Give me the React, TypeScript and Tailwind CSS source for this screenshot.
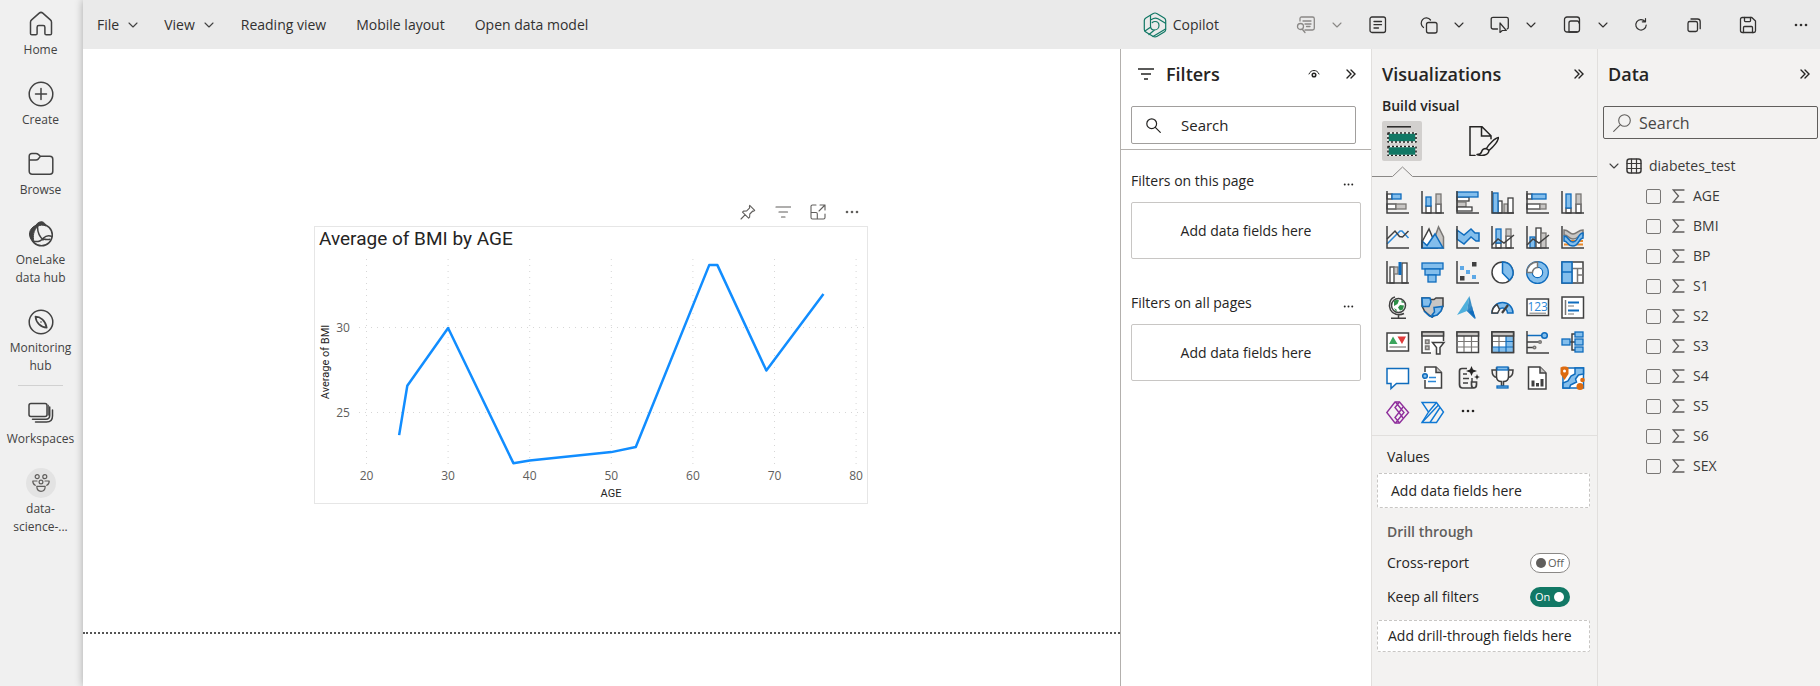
import React from "react";

type IconProps = { className?: string; children: React.ReactNode; box?: string };

function Icon({ className = "size-6", box = "0 0 24 24", children }: IconProps) {
  return (
    <svg
      className={className}
      viewBox={box}
      fill="none"
      stroke="currentColor"
      strokeWidth="1.5"
      strokeLinecap="round"
      strokeLinejoin="round"
      aria-hidden="true"
    >
      {children}
    </svg>
  );
}

const HomeIcon = () => (
  <Icon className="size-[26px]" box="0 0 26 26">
    <path d="M2.500 11.200c0-1 .4-1.700 1.100-2.300l7.600-6.800c1.100-.9 2.500-.9 3.600 0l7.600 6.800c.7.6 1.100 1.300 1.100 2.300v11.300c0 .8-.6 1.300-1.300 1.300h-4c-.8 0-1.300-.6-1.300-1.300v-6.300c0-1-.7-1.700-1.700-1.700h-4.400c-1 0-1.700.7-1.700 1.700v6.300c0 .8-.6 1.300-1.300 1.300h-4c-.8 0-1.300-.6-1.300-1.300z" />
  </Icon>
);

const CreateIcon = () => (
  <Icon className="size-[26px]" box="0 0 26 26">
    <circle cx="13" cy="13" r="11.800" />
    <path d="M13 7.500v11M7.500 13h11" />
  </Icon>
);

const BrowseIcon = () => (
  <Icon className="size-[26px]" box="0 0 26 26">
    <path d="M1.200 9V5.200c0-1.700 1-2.800 2.700-2.800h4c1 0 1.700.3 2.400 1l2 1.800h9.500c1.800 0 3 1.200 3 3v12c0 1.800-1.200 3-3 3H4.200c-1.800 0-3-1.200-3-3zh6.800c.9 0 1.600-.3 2.200-.9l2-2.600" />
  </Icon>
);

const OneLakeIcon = () => (
  <Icon className="size-[26px]" box="0 0 26 26">
    <circle cx="13.500" cy="14" r="10.800" />
    <path d="M8 4C9.500 1.500 12 .5 14 .8c2 .3 3.500 2 4 4.200-3-1.400-6-1.200-8.500.5z" fill="currentColor" strokeWidth="1" />
    <path d="M7.500 4.500C3.500 6.500 1.500 9.500 1.500 13c0 3.500 1.700 6.500 4.500 8C4.500 15 5.500 9.500 9.500 5.500z" fill="currentColor" strokeWidth="1" />
    <path d="M9.500 5.500c0 7 2.500 10 5.500 13.500M6 20.500c6 .5 7-1 9.500-3.500s5-3 8.500-1.500M16 18c2 1 4 .5 6 .3" />
  </Icon>
);

const MonitorIcon = () => (
  <Icon className="size-[26px]" box="0 0 26 26">
    <circle cx="13" cy="13" r="11.800" />
    <path d="M7.500 7.500c4.500 0 10 4 11.200 11.200C13 18.500 8 14 7.500 7.500z" strokeWidth="1.700" />
    <circle cx="13" cy="13" r=".8" fill="currentColor" stroke="none" />
  </Icon>
);

const WorkspacesIcon = () => (
  <Icon className="h-[22px] w-[26px]" box="0 0 26 22">
    <rect x="1" y="1.500" width="18" height="13" rx="2" />
    <path d="M4.500 17.300h13.500c2.300 0 3.700-1.400 3.700-3.700V5M7.500 20h11c3.700 0 6-2.300 6-6V8" />
    <path d="M20.300 3.200v10" strokeWidth="1" />
  </Icon>
);

const PeopleIcon = () => (
  <Icon className="size-[18px] text-[#605e5c]" box="0 0 18 18">
    <g strokeWidth="1.200">
      <circle cx="5.200" cy="2.700" r="2" />
      <circle cx="12.800" cy="2.700" r="2" />
      <circle cx="9" cy="8" r="1.900" />
      <path d="M4.800 12.300h8.400c0 3-1.500 5-4.200 5s-4.200-2-4.200-5zM5 7H.8c0 2.200.9 3.700 2.500 4.300M13 7h4.200c0 2.200-.9 3.700-2.500 4.300" />
    </g>
  </Icon>
);

function NavItem({ icon, label, gap = "gap-1" }: { icon: React.ReactNode; label: React.ReactNode; gap?: string }) {
  return (
    <a href="#" className={`flex w-full flex-col items-center text-center text-xs/[18px] text-[#424242] ${gap}`}>
      {icon}
      <span>{label}</span>
    </a>
  );
}

function Sidebar() {
  return (
    <nav aria-label="Main" className="flex w-[83px] shrink-0 flex-col items-center bg-[#f0f0f0] pt-[11px] pr-[2px] text-[#424242]">
      <div className="flex w-full flex-col gap-[22px]">
        <NavItem icon={<HomeIcon />} label="Home" />
        <NavItem icon={<CreateIcon />} label="Create" />
        <NavItem icon={<BrowseIcon />} label="Browse" />
        <NavItem icon={<OneLakeIcon />} label={<>OneLake<br />data hub</>} />
      </div>
      <div className="mt-[22px] w-full">
        <NavItem icon={<MonitorIcon />} label={<>Monitoring<br />hub</>} />
      </div>
      <div className="mt-[10px] h-px w-[45px] bg-[#d1d1d1]" />
      <div className="mt-4 w-full">
        <NavItem icon={<WorkspacesIcon />} label="Workspaces" gap="gap-[6px]" />
      </div>
      <div className="mt-5 w-full">
        <NavItem
          icon={<span className="flex size-[30px] items-center justify-center rounded-full bg-[#e3e3e3]"><PeopleIcon /></span>}
          label={<>data-<br />science-...</>}
          gap="gap-[2px]"
        />
      </div>
    </nav>
  );
}

const Chevron = ({ className = "text-[#424242]" }: { className?: string }) => (
  <Icon className={`h-[6px] w-[10px] ${className}`} box="0 0 10 6">
    <path d="M1 1l4 4 4-4" strokeWidth="1.100" />
  </Icon>
);

const CopilotIcon = () => (
  <Icon className="h-[26px] w-6 text-[#117865]" box="0 0 24 26">
    <g strokeWidth="1.200">
      <path d="M12 1c1 0 1.500.3 2.200.7l7 4.200c1 .6 1.500 1.400 1.500 2.600v9c0 1.200-.5 2-1.500 2.600l-7 4.200c-1.500.9-2.900.9-4.400 0l-7-4.200c-1-.6-1.500-1.400-1.500-2.600v-9c0-1.200.5-2 1.500-2.600l7-4.200C10.500 1.300 11 1 12 1z" />
      <path d="M7.500 3.500V14c0 2.500 1.500 4 4 4s4.500-2 4.500-4.500-1.700-4-4-4c-1 0-2 .4-2.700 1M7.500 8l3-1.500c1.500-.7 3-.5 4.500.3l7.500 4.500M2 19l5.800-4M6 22.500l5.500-4.500M10 24.500l12.500-7.500" />
    </g>
  </Icon>
);

const CommentIcon = () => (
  <Icon className="h-[18px] w-5 text-[#8a8886]" box="0 0 20 18">
    <g strokeWidth="1.300">
      <path d="M4 5V2.500C4 1.500 4.700 1 5.500 1h11c1 0 1.800.7 1.800 1.700v9.600c0 1-.8 1.700-1.800 1.700H9M7 5h8M9 8h6M10.500 10.500H14M6.500 13.500l2.500 3" />
      <circle cx="4.500" cy="10.500" r="3" />
    </g>
  </Icon>
);
const DocIcon = () => (
  <Icon className="h-[18px] w-5" box="0 0 20 18">
    <rect x="2" y="1" width="15.500" height="15.500" rx="2" strokeWidth="1.300" />
    <path d="M6 5.500h7.500M6 8.700h7.500M6 12h4.500" strokeWidth="1.300" />
  </Icon>
);
const ShapesIcon = () => (
  <Icon className="h-[20px] w-5" box="0 0 20 20">
    <g strokeWidth="1.300">
      <path d="M5.500 12.500A5.200 5.200 0 1 1 12.500 5" />
      <rect x="8.500" y="7.500" width="10.500" height="10.500" rx="2" />
    </g>
  </Icon>
);
const ButtonIcon = () => (
  <Icon className="h-[18px] w-5" box="0 0 20 18">
    <path d="M7.500 13H3c-1 0-1.800-.7-1.800-1.800V3C1.200 2 2 1.300 3 1.300h13.500c1 0 1.800.7 1.800 1.700v8.200c0 .8-.3 1.400-1 1.700" strokeWidth="1.300" />
    <path d="M10 7v9.500l2.300-2h4z" strokeWidth="1.200" />
  </Icon>
);
const PanelIcon = () => (
  <Icon className="h-[18px] w-5" box="0 0 20 18">
    <rect x="2.500" y="1" width="15" height="15" rx="2.500" strokeWidth="1.300" />
    <path d="M7 16V7c0-1.300.7-2 2-2h6c1.300 0 2 .7 2 2M7 16h8" strokeWidth="1.300" />
  </Icon>
);
const RefreshIcon = () => (
  <Icon className="size-4" box="0 0 16 16">
    <path d="M12 4.500A5.200 5.200 0 1 0 13.200 8M12.500 1.500v3.300H9.300" strokeWidth="1.200" />
  </Icon>
);
const CopyIcon = () => (
  <Icon className="size-4" box="0 0 16 16">
    <rect x="2" y="4.500" width="9.500" height="10" rx="1.800" strokeWidth="1.300" />
    <path d="M5 2h6.500c1.600 0 2.700 1 2.700 2.700v7" strokeWidth="1.300" />
  </Icon>
);
const SaveIcon = () => (
  <Icon className="size-[18px]" box="0 0 18 18">
    <g strokeWidth="1.300">
      <path d="M3.200 1.500h9.600l3.700 3.500v9.800c0 1-.7 1.700-1.700 1.700H3.200c-1 0-1.700-.7-1.700-1.700V3.200c0-1 .7-1.700 1.700-1.700z" />
      <path d="M5.500 1.500v3.300c0 .5.300.8.800.8h4.400c.5 0 .8-.3.800-.8V1.500M4.500 16.500v-5c0-.6.300-1 1-1h7c.7 0 1 .4 1 1v5" />
    </g>
  </Icon>
);
const DotsIcon = ({ className = "h-1 w-[14px]" }: { className?: string }) => (
  <svg className={className} viewBox="0 0 14 4" fill="currentColor" aria-hidden="true">
    <circle cx="2" cy="2" r="1.300" />
    <circle cx="7" cy="2" r="1.300" />
    <circle cx="12" cy="2" r="1.300" />
  </svg>
);

function Tool({ label, icon, menu, muted }: { label: string; icon: React.ReactNode; menu?: boolean; muted?: boolean }) {
  return (
    <button type="button" aria-label={label} className="flex items-center gap-4 text-[#323130]">
      {icon}
      {menu && <Chevron className={muted ? "text-[#8a8886]" : "text-[#323130]"} />}
    </button>
  );
}

function TopBar() {
  return (
    <header className="flex h-[49px] shrink-0 items-center bg-[#eaeaea] pr-3 pl-[14px] text-sm text-[#323130]">
      <div className="flex items-center gap-[26px]">
        <button type="button" className="flex items-center gap-[9px]">File <Chevron /></button>
        <button type="button" className="flex items-center gap-[9px]">View <Chevron /></button>
      </div>
      <div className="ml-[27px] flex items-center gap-[30px]">
        <button type="button">Reading view</button>
        <button type="button">Mobile layout</button>
        <button type="button">Open data model</button>
      </div>
      <div className="ml-auto flex items-center">
        <button type="button" className="mr-[77px] flex items-center gap-[6px]"><CopilotIcon />Copilot</button>
        <div className="flex items-center gap-[26px]">
          <Tool label="Explore" icon={<CommentIcon />} menu muted />
          <div className="flex items-center gap-[30px]">
            <Tool label="Text box" icon={<DocIcon />} />
            <Tool label="Shapes" icon={<ShapesIcon />} menu />
          </div>
          <Tool label="Buttons" icon={<ButtonIcon />} menu />
          <Tool label="Visual interactions" icon={<PanelIcon />} menu />
        </div>
        <div className="ml-[25px] flex items-center gap-[37px]">
          <Tool label="Refresh" icon={<RefreshIcon />} />
          <Tool label="Duplicate this page" icon={<CopyIcon />} />
          <Tool label="Save" icon={<SaveIcon />} />
          <Tool label="More options" icon={<DotsIcon />} />
        </div>
      </div>
    </header>
  );
}

const series: [number, number][] = [
  [24, 23.7], [25, 26.6], [30, 30], [38, 22.05], [40, 22.2], [50, 22.7], [53, 23], [62, 33.7], [63, 33.7], [69, 27.5], [76, 32],
];
const ages = [20, 30, 40, 50, 60, 70, 80];
const px = (age: number) => 51.5 + (age - 20) * 8.16;
const py = (bmi: number) => 101 - (bmi - 30) * 17;

function LineChart() {
  return (
    <svg viewBox="0 0 552 276" className="block w-full" role="img" aria-label="Average of BMI by AGE">
      <g stroke="#d6d6d6" strokeWidth="1" strokeDasharray="1 5">
        {ages.map((a) => <line key={a} x1={px(a)} x2={px(a)} y1="32" y2="238" />)}
        <line x1="44" x2="550" y1="100.500" y2="100.500" />
        <line x1="44" x2="550" y1="185.500" y2="185.500" />
      </g>
      <polyline points={series.map(([a, b]) => `${px(a)},${py(b)}`).join(" ")} fill="none" stroke="#118dff" strokeWidth="2.500" strokeLinejoin="round" />
      <g className="fill-[#605e5c] font-['Open_Sans',sans-serif] text-xs" textAnchor="middle">
        {ages.map((a) => <text key={a} x={px(a)} y="253">{a}</text>)}
        <text x="28" y="105">30</text>
        <text x="28" y="190">25</text>
      </g>
      <g className="fill-[#252423] font-['Roboto',sans-serif] text-[11px]" textAnchor="middle">
        <text x="296" y="270">AGE</text>
        <text transform="translate(14 135) rotate(-90)">Average of BMI</text>
      </g>
    </svg>
  );
}

function Canvas() {
  return (
    <main className="flex min-w-0 flex-1 flex-col bg-white">
      <div className="flex h-[585px] flex-col border-b-2 border-dotted border-[#555] pr-4 pl-[231px]">
        <section className="mt-[154px] w-full max-w-[554px]">
          <div className="flex h-[23px] items-center justify-end gap-[19px] pr-[9px] pb-[6px] text-[#605e5c]">
            <button type="button" aria-label="Pin visual">
              <Icon className="size-4" box="0 0 16 16">
                <path d="M9.700 1.300l5 5-.9.900-1-.2-3 3-.2 3.200-1 1L2.500 8.100l1-1 3.200-.2 3-3-.3-1.200zM5 10.800L1 15" strokeWidth="1.100" />
              </Icon>
            </button>
            <button type="button" aria-label="Filters on visual">
              <Icon className="size-4" box="0 0 16 16"><path d="M1 3h14.500M4 8h8.500M6.500 13h3.500" strokeWidth="1.200" /></Icon>
            </button>
            <button type="button" aria-label="Focus mode">
              <Icon className="size-4" box="0 0 16 16">
                <path d="M6 1H2.500C1.600 1 1 1.600 1 2.500V13.500c0 .9.600 1.500 1.500 1.500h11c.9 0 1.500-.6 1.500-1.500V10M1 8.500h5c.8 0 1.300.5 1.300 1.300V15M10 1h5v5M15 1L9 7" strokeWidth="1.100" />
              </Icon>
            </button>
            <button type="button" aria-label="More options"><DotsIcon /></button>
          </div>
          <div className="border border-[#e6e6e6]">
            <h2 className="h-0 px-1 font-['Roboto',sans-serif] text-[19px]/6 font-normal text-[#252423]">Average of BMI by AGE</h2>
            <LineChart />
          </div>
        </section>
      </div>
    </main>
  );
}

const DoubleChevron = () => (
  <Icon className="h-[10px] w-[10px] text-[#252423]" box="0 0 10 10">
    <path d="M1 1l4 4-4 4M5 1l4 4-4 4" strokeWidth="1.400" strokeLinejoin="miter" />
  </Icon>
);

const heading = "text-lg/6 font-semibold text-[#252423]";

function FilterGroup({ title }: { title: string }) {
  return (
    <section>
      <div className="flex items-center justify-between pr-[7px]">
        <h3>{title}</h3>
        <button type="button" aria-label={`${title} options`} className="pt-[6px]"><DotsIcon className="h-[3px] w-[11px]" /></button>
      </div>
      <div className="mt-[11px] flex h-[57px] items-center justify-center rounded-xs border border-[#c8c6c4]">Add data fields here</div>
    </section>
  );
}

function FiltersPane() {
  return (
    <aside aria-label="Filters" className="w-[251px] shrink-0 border-l border-[#b3b0ad] bg-white text-sm/5 text-[#252423]">
      <div className="flex h-[101px] flex-col border-b border-[#b3b0ad] pt-[13px] pl-[10px]">
        <div className="flex items-center pr-[15px] pl-[7px]">
          <Icon className="h-3 w-4" box="0 0 16 12"><path d="M0 1h16M3 6h10M6 11h4" strokeLinecap="butt" strokeWidth="1.600" /></Icon>
          <h2 className={`ml-3 ${heading}`}>Filters</h2>
          <button type="button" aria-label="Show filters" className="ml-auto mr-[26px]">
            <Icon className="h-[10px] w-3" box="0 0 12 10">
              <path d="M1 5C2 2.500 4 1.500 6 1.500S10 2.500 11 5" strokeWidth="1" />
              <circle cx="6" cy="6" r="1.800" />
            </Icon>
          </button>
          <button type="button" aria-label="Collapse filters"><DoubleChevron /></button>
        </div>
        <label className="mt-5 mr-[15px] flex h-[38px] items-center rounded-xs border border-[#a19f9d]">
          <Icon className="ml-[14px] size-[15px] shrink-0" box="0 0 15 15">
            <circle cx="5.700" cy="5.700" r="4.900" strokeWidth="1.200" />
            <path d="M9.300 9.300l5 5" strokeWidth="1.200" />
          </Icon>
          <input aria-label="Search filters" placeholder="Search" className="ml-5 w-full min-w-0 bg-transparent text-[15px] outline-none placeholder:text-[#252423]" />
        </label>
      </div>
      <div className="flex flex-col gap-[34px] pt-[21px] pr-[10px] pl-[10px]">
        <FilterGroup title="Filters on this page" />
        <FilterGroup title="Filters on all pages" />
      </div>
    </aside>
  );
}

const D = "#404040";
const B = "#83beec";
const BL = "#0f6cbd";
const G = "#c8c6c4";
const GL = "#797775";
const W = "#fff";
const Axes = () => <path d="M1 0V22H23" stroke={D} />;
const Bar = ({ b, f = W, s = D }: { b: [number, number, number, number]; f?: string; s?: string }) => (
  <rect x={b[0]} y={b[1]} width={b[2] - b[0]} height={b[3] - b[1]} fill={f} stroke={s} strokeWidth="1.300" />
);

const visuals: [string, React.ReactNode][] = [
  ["Stacked bar chart", <><Bar b={[1, 3, 6, 8]} /><Bar b={[6, 3, 15, 8]} f={B} s={BL} /><Bar b={[1, 13, 10, 18]} /><Bar b={[10, 13, 20, 18]} f={G} s={GL} /><Axes /></>],
  ["Stacked column chart", <><Bar b={[5, 15, 10, 22]} /><Bar b={[5, 6, 10, 15]} f={B} s={BL} /><Bar b={[15, 13, 20, 22]} /><Bar b={[15, 3, 20, 13]} f={G} s={GL} /><Axes /></>],
  ["Clustered bar chart", <><Bar b={[1, 6, 13, 10]} /><Bar b={[1, 11, 10, 16]} f={G} s={GL} /><Bar b={[1, 16, 16, 20]} /><Bar b={[1, 1, 22, 6]} f={B} s={BL} /><Axes /></>],
  ["Clustered column chart", <><Bar b={[7, 10, 11, 22]} /><Bar b={[13, 13, 17, 22]} f={G} s={GL} /><Bar b={[17, 7, 22, 22]} /><Bar b={[2, 2, 7, 22]} f={B} s={BL} /><Axes /></>],
  ["100% stacked bar chart", <><Bar b={[1, 3, 6, 8]} /><Bar b={[6, 3, 20, 8]} f={B} s={BL} /><Bar b={[1, 13, 14, 18]} /><Bar b={[14, 13, 20, 18]} f={G} s={GL} /><Axes /></>],
  ["100% stacked column chart", <><Bar b={[5, 17, 10, 22]} /><Bar b={[5, 3, 10, 17]} f={B} s={BL} /><Bar b={[15, 13, 20, 22]} /><Bar b={[15, 3, 20, 13]} f={G} s={GL} /><Axes /></>],
  ["Line chart", <><path d="M1 18L14 5h2l6.500 7" stroke="#2b88d8" /><path d="M1 13l8-8 4.500 5.500 3 .5 6-6" stroke={D} /><Axes /></>],
  ["Area chart", <><path d="M10 22L17.500 1l5 10v11z" fill={G} stroke={GL} /><path d="M1 16L8 3l8 19H1z" fill={W} stroke={D} /><path d="M1 22v-7l5 4.500L14 8l8 14z" fill={B} stroke={BL} /><path d="M1 0V22" stroke={D} /></>],
  ["Stacked area chart", <><path d="M1 4l7 5 7-6 4 4h4v8h-3l-5-4-7 7-7-5z" fill={B} stroke={BL} /><Axes /></>],
  ["Line and stacked column chart", <><Bar b={[5, 17, 10, 22]} /><Bar b={[5, 3, 10, 17]} f={B} s={BL} /><Bar b={[15, 10, 20, 22]} /><Bar b={[15, 3, 20, 10]} f={G} s={GL} /><path d="M1 19l6-6 6 4 10-8" stroke={D} /><Axes /></>],
  ["Line and clustered column chart", <><Bar b={[4, 11, 9, 22]} f={B} s={BL} /><Bar b={[10, 2, 15, 22]} /><Bar b={[15, 7, 20, 22]} f={G} s={GL} /><path d="M1 19l6-6 6 4 10-8" stroke={D} /><Axes /></>],
  ["Ribbon chart", <><path d="M3 15h19M3 18.500h19" stroke="#e8882a" strokeWidth="2.200" /><path d="M3 4c5 0 5 4 9 4s5-4 10-4v5c-5 0-5 4-10 4s-4-4-9-4z" fill={G} stroke={GL} /><path d="M3 10c5 0 4 6 9 6s5-9 10-9v5c-4 0-4 8-10 8s-5-5-9-5z" fill={B} stroke={BL} /><Axes /></>],
  ["Waterfall chart", <><Bar b={[4, 6, 8, 22]} /><Bar b={[8, 6, 12, 13]} f={G} s={GL} /><Bar b={[16, 2, 21, 22]} /><rect x="12.500" y="1" width="3" height="13" fill={BL} stroke="none" /><Axes /></>],
  ["Funnel", <><Bar b={[1, 2, 22, 8]} f={B} s={BL} /><Bar b={[4, 8, 19, 14]} f={B} s={BL} /><Bar b={[7, 14, 15, 21]} f={B} s={BL} /></>],
  ["Scatter chart", <><g stroke="none"><path d="M16 1h4.500v4.500H16zM4 15h4.500v4.500H4z" fill={D} /><path d="M4 5h4v4H4zM10 9h4v4H10zM16 14h4v4H16z" fill="#5ea9e6" /></g><Axes /></>],
  ["Pie chart", <><circle cx="11.500" cy="11.500" r="10.500" fill={W} stroke={D} /><path d="M11.500 1A10.500 10.500 0 0 1 18.500 19.300L11.500 12z" fill={B} stroke={BL} /></>],
  ["Donut chart", <><circle cx="11.500" cy="11.500" r="8" stroke={BL} strokeWidth="7" /><circle cx="11.500" cy="11.500" r="8" stroke={B} strokeWidth="4.500" /><circle cx="11.500" cy="11.500" r="4.500" fill={W} stroke="none" /><path d="M1 11.500A10.500 10.500 0 0 1 11.500 1V6.500A5 5 0 0 0 6.500 11.500z" fill={W} stroke={GL} /></>],
  ["Treemap", <><rect x="1" y="1" width="21" height="21" fill={W} stroke={D} /><path d="M11 1v21M11 7.500h11M16.500 7.500v14M16.500 14H22" stroke={GL} /><path d="M1 1h10v10H1zM1 11h10v11H1z" fill={B} stroke={BL} /></>],
  ["Map", <><circle cx="12.500" cy="9.500" r="7" fill={W} stroke={D} /><path d="M8 5c2-1.500 4-1.500 5-.5l-1.500 3.500L8 10zM14 9l4 .5-1 4-3 1-2-3zM8 12l3 2-1 1.500zM15.500 4l3 3-3-.5z" fill="#2d8f47" stroke="none" /><path d="M12.500 19.500v3M5 22.300h15M9 1C4 2 2 9 4.500 14c2 4 8 6 13.500 3.500" stroke={D} /></>],
  ["Filled map", <><path d="M1 2h7l1 1.500h4L15 2h7v8.500c-1 1-1.500 2-1.500 3.500l-4 4.500-3 .5-2 2-3-1.500-5-4.500L1 10z" fill={G} stroke={D} /><path d="M1 2h8l1 4-2 4.500H1.500zM13 11.500l8.500-1-1.500 4.500-4 4-3 1-2-1 2.500-3z" fill={B} stroke={BL} /><path d="M3 15l5 4.500 3 1.500 1-1" stroke={BL} /></>],
  ["Azure map", <g stroke="none"><path d="M13.500 0L1 19l10-4z" fill="#4fb0dc" /><path d="M13.500 0L11 15l8 8z" fill="#3b8fc6" /><path d="M11 15l8 8-3-13z" fill="#2a7fc2" /><path d="M13 16l4-2 3 9z" fill="#0f6cbd" /></g>],
  ["Gauge", <><path d="M1 17a10.500 10.500 0 0 1 21 0h-5.500a5 5 0 0 0-10 0z" fill={B} stroke={BL} /><path d="M1 17A10.500 10.500 0 0 1 6 8.500l2.500 5L6.500 17z" fill={W} stroke={D} /><path d="M11 17l6-8" stroke={D} strokeWidth="2.200" /></>],
  ["Card", <><rect x="1" y="3" width="21.500" height="16.500" fill={W} stroke={D} /><text x="11.700" y="15" textAnchor="middle" fontSize="12" fill="#2b88d8" stroke="none" className="font-['Open_Sans',sans-serif]">123</text><path d="M3.500 17.200h16.500" stroke={GL} strokeWidth="1" /></>],
  ["Multi-row card", <><rect x="1" y="1" width="21.500" height="21" fill={W} stroke={D} /><path d="M4.500 4v15" stroke={GL} /><path d="M7 6.500h11M7 14.500h11" stroke={BL} strokeWidth="2" /><path d="M7 10h6M7 18h6" stroke={GL} strokeWidth="1.200" /></>],
  ["KPI", <><rect x="1" y="2" width="21.500" height="18" fill={W} stroke={D} /><path d="M3 13L7 5.500l4.500 7.500z" fill="#3ba55d" stroke="none" /><path d="M11.500 5.500h8.500L16 13z" fill="#e03c3c" stroke="none" /><path d="M3.500 16h16.500" stroke={GL} strokeWidth="1.200" /></>],
  ["Slicer", <><path d="M10 22H1V1h21.500v9" fill={W} stroke={D} /><path d="M1 1h21.500v4H1z" fill={G} stroke={D} /><path d="M4.500 9H8v3.500H4.500zM4.500 15H8v3.500H4.500z" fill={G} stroke={GL} /><path d="M11.500 11.500H23l-4 5v6.500h-3.500v-6.500z" fill={W} stroke={D} /></>],
  ["Table", <><rect x="1" y="1" width="21.500" height="20.500" fill={W} stroke={D} /><path d="M1 10.500h21.500M1 16h21.500M8 5v16M15.500 5v16" stroke={GL} strokeWidth="1.200" /><path d="M1 1h21.500v4H1z" fill={G} stroke={D} /></>],
  ["Matrix", <><rect x="1" y="1" width="21.500" height="20.500" fill={W} stroke={D} /><path d="M15 5h7.500v16.500H1V16h14z" fill={B} stroke="none" /><path d="M1 10.500h14M8 5v11" stroke={GL} strokeWidth="1.200" /><path d="M15 10.500h7.500M1 16h21.500M8 16v5M15 5v16" stroke={BL} strokeWidth="1.200" /><path d="M1 1h21.500v20.500H1z" stroke={D} /><path d="M1 1h21.500v4H1z" fill={G} stroke={D} /></>],
  ["Decomposition tree", <><path d="M1 4.500h15" stroke={BL} /><circle cx="18.500" cy="4.500" r="2.800" fill={B} stroke={BL} /><path d="M1 11h12M1 16.500h6" stroke={D} /><circle cx="14" cy="11" r="1.300" fill={G} stroke={GL} /><circle cx="8.500" cy="16.500" r="1.300" fill={G} stroke={GL} /><Axes /></>],
  ["Key influencers", <><path d="M8 11h6M14 3h-3v16h3" stroke={D} /><Bar b={[1, 8, 9, 14]} f={B} s={BL} /><Bar b={[14, 1, 22, 6]} f={B} s={BL} /><Bar b={[14, 8, 22, 14]} f={B} s={BL} /><Bar b={[14, 16, 22, 21]} f={B} s={BL} /></>],
  ["Q&A", <path d="M1 2.500h21.500v15H10.500L5 22.500v-5H1z" fill={W} stroke={BL} />],
  ["Narrative", <><path d="M4 6V1h11l5.500 5.500V22H4v-8" fill={W} stroke={D} /><path d="M15 1v5.500h5.500" fill={G} stroke={D} /><path d="M8 11.500h7M7 15.500h8" stroke="#2b88d8" /><circle cx="4" cy="10" r="2.300" fill={B} stroke={BL} /></>],
  ["Metrics", <><path d="M11 2.500H6c-1.600 0-2.500 1-2.500 2.500v12v1.500c0 2 1 3.500 3 3.500h11c2 0 3-1.300 3-3.500V16h-5v2.500c0 2 .8 3.500 2.500 3.500" stroke={D} strokeWidth="1.700" /><path d="M16 12v4" stroke={D} /><path d="M7 8h4M7 12.500h6M7 17h5" stroke={D} /><path d="M15.500 0l1.500 3.500 4 1.500-4 1.500-1.500 3.500-1.500-3.500-4-1.500 4-1.500zM21 8l.8 2.200L24 11l-2.200.8L21 14l-.8-2.200L18 11l2.200-.8z" fill="#252423" stroke="none" /></>],
  ["Goals", <><path d="M5.500 4H1c0 5 2 7.500 5.500 7.500M17.500 4H22c0 5-2 7.500-5.500 7.500" stroke={D} /><path d="M5.500 2h12v8.500c0 3-2 5-5 5v4.500h-2v-4.500c-3 0-5-2-5-5z" fill={W} stroke={D} /><Bar b={[6, 1, 17, 4]} f={B} s={BL} /><Bar b={[6, 20, 17, 22]} f={B} s={BL} /></>],
  ["Paginated report", <><path d="M2.500 1H14l6 6v16H2.500z" fill={W} stroke={D} /><path d="M14 1v6h6" fill={G} stroke={D} /><path d="M7 20.500v-6M11.500 20.500v-3.500M16 20.500v-7.500" stroke={D} strokeWidth="3" /></>],
  ["ArcGIS Maps", <><path d="M2 2h20.500v20H2z" fill={W} stroke={BL} /><path d="M14 2h8.500v6l-5 1-3 4 1 3-6 3-1 3H2v-5l5-2 3-5 4-2z" fill={B} stroke={BL} /><g fill="#dd6b10" stroke="none"><path d="M-.5 1.500C1 0 5.500 0 7.500 1.500V8l-4 6-4-6z" /><circle cx="21.500" cy="14" r="2.300" /><circle cx="19" cy="20.500" r="3.500" /></g><circle cx="3.500" cy="5" r="1.500" fill={W} stroke="none" /></>],
  ["Power Apps", <g stroke="#8f2f9c" strokeWidth="1.400"><path d="M9 1h4.500l9 10.500-9 10.500H9L.8 11.500z" /><path d="M9.500 1l8.500 10.500L9.500 22M13.500 1L9 6.500l4 5-4 5 4.500 5.500M13 11.500L17 6M13 11.500l4 5.500" /></g>],
  ["Power Automate", <g stroke="#0f78d4" strokeWidth="1.400"><path d="M1 1.500h14.500l7 9.500-7 10.500H1L7.500 11z" /><path d="M7.500 11L15.500 1.500M1 21.500L17.500 4M9 21.500l10-15" /></g>],
];

function Toggle({ label, on }: { label: string; on?: boolean }) {
  return (
    <label className="flex h-5 items-center justify-between pr-[27px] pl-[15px]">
      <span>{label}</span>
      <input type="checkbox" role="switch" defaultChecked={on} className="sr-only" />
      {on ? (
        <span className="flex h-5 w-10 items-center justify-between rounded-full bg-[#117865] pr-[6px] pl-[5px] text-[11px] text-white">On<i className="size-[10px] rounded-full bg-white" /></span>
      ) : (
        <span className="flex h-5 w-10 items-center justify-between rounded-full border border-[#8a8886] bg-white pr-[5px] pl-[5px] text-[11px] text-[#605e5c]"><i className="size-[10px] rounded-full bg-[#605e5c]" />Off</span>
      )}
    </label>
  );
}

function VisualizationsPane() {
  return (
    <aside aria-label="Visualizations" className="w-[226px] shrink-0 border-l border-[#e1dfdd] bg-[#f3f2f1] text-sm/5 text-[#252423]">
      <div className="flex items-center justify-between pt-[13px] pr-[13px] pl-[10px]">
        <h2 className={heading}>Visualizations</h2>
        <button type="button" aria-label="Collapse visualizations"><DoubleChevron /></button>
      </div>
      <h3 className="mt-[10px] pl-[10px] font-semibold">Build visual</h3>
      <div className="mt-[5px] flex gap-[42px] pl-[10px]">
        <button type="button" aria-label="Build visual" className="flex size-10 items-center justify-center rounded-xs bg-[#d2d0ce]">
          <Icon className="size-[30px]" box="0 0 30 30">
            <g strokeLinecap="butt">
              <path d="M0 .8h24" stroke="#252423" />
              <path d="M1 7h28v9H1zM1 20.500h28v9H1z" fill="#117865" stroke="#f3f2f1" strokeWidth="1.400" />
              <path d="M1 7h28v9H1zM1 20.500h28v9H1z" stroke="#252423" strokeWidth="1.600" strokeDasharray="2 2" />
            </g>
          </Icon>
        </button>
        <button type="button" aria-label="Format page" className="flex size-10 items-center justify-center">
          <Icon className="size-[30px]" box="0 0 30 30">
            <path d="M6 29.500H1V.8h12l9 9v3M12.500.8V10H21" strokeLinejoin="miter" />
            <path d="M29.500 11.500c-3.500.5-10 7-12 11l2.500 2c3.500-3 9-9 9.500-13zM17 22.500c-2.500 0-4 1.500-4.500 3.500-.4 1.500-2 2.500-4.500 2.500 5 1.800 11.500 1 12-4z" />
          </Icon>
        </button>
      </div>
      <svg className="mt-[5px] block h-[11px] w-full text-[#8a8886]" viewBox="0 0 225 11" preserveAspectRatio="none" fill="none" stroke="currentColor" aria-hidden="true">
        <path d="M0 10.500H20.500L30.500 1l10 9.500H225" />
      </svg>
      <div className="grid grid-cols-[repeat(6,23px)] gap-3 pt-[14px] pl-[14px]">
        {visuals.map(([name, art]) => (
          <button key={name} type="button" aria-label={name} title={name} className="size-[23px]">
            <svg viewBox="0 0 23 23" className="size-[23px] overflow-visible" fill="none" strokeWidth="1.500" aria-hidden="true">{art}</svg>
          </button>
        ))}
        <button type="button" aria-label="Get more visuals" className="flex h-5 items-center justify-center"><DotsIcon /></button>
      </div>
      <div className="mt-[11px] border-t border-[#e1dfdd] pt-[11px] pr-[7px] pl-[5px]">
        <h3 className="pl-[10px]">Values</h3>
        <div className="mt-[6px] flex h-[35px] items-center rounded-xs border border-dashed border-[#c8c6c4] bg-white pl-[13px]">Add data fields here</div>
        <h3 className="mt-[14px] pl-[10px] font-semibold text-[#605e5c]">Drill through</h3>
      </div>
      <div className="mt-[11px] flex flex-col gap-[14px]">
        <Toggle label="Cross-report" />
        <Toggle label="Keep all filters" on />
      </div>
      <div className="mt-[13px] mr-[7px] ml-[5px] flex h-[32px] items-center rounded-xs border border-dashed border-[#c8c6c4] bg-white pl-[10px] whitespace-nowrap">Add drill-through fields here</div>
    </aside>
  );
}

const fields = ["AGE", "BMI", "BP", "S1", "S2", "S3", "S4", "S5", "S6", "SEX"];

function DataPane() {
  return (
    <aside aria-label="Data" className="w-[223px] shrink-0 border-l border-[#e1dfdd] bg-[#f3f2f1] text-sm/5 text-[#3b3a39]">
      <div className="flex items-center justify-between pt-[13px] pr-[10px] pl-[10px]">
        <h2 className={heading}>Data</h2>
        <button type="button" aria-label="Collapse data"><DoubleChevron /></button>
      </div>
      <label className="mt-5 mr-[2px] ml-[5px] flex h-[33px] items-center rounded-xs border border-[#605e5c]">
        <Icon className="ml-[9px] size-[18px] shrink-0 text-[#605e5c]" box="0 0 18 18">
          <circle cx="11.500" cy="6.500" r="5.800" strokeWidth="1.100" />
          <path d="M7.200 10.800L.7 17.300" strokeWidth="1.100" />
        </Icon>
        <input aria-label="Search data" placeholder="Search" className="ml-2 w-full min-w-0 bg-transparent text-base outline-none placeholder:text-[#484644]" />
      </label>
      <button type="button" className="mt-[17px] flex h-5 items-center pl-[11px]">
        <Chevron />
        <Icon className="ml-[7px] size-4" box="0 0 16 16">
          <rect x="1" y="1" width="14" height="14" rx="2.500" />
          <path d="M5.500 1v14M10.500 1v14M1 5.500h14M1 10.500h14" strokeWidth="1.200" />
        </Icon>
        <span className="ml-[7px]">diabetes_test</span>
      </button>
      <ul className="mt-[5px]">
        {fields.map((f) => (
          <li key={f}>
            <label className="flex h-[30px] items-center pl-12">
              <input type="checkbox" className="size-[15px] appearance-none rounded-[2px] border border-[#797775] checked:bg-[#117865]" />
              <Icon className="ml-[11px] h-[14px] w-[13px] text-[#605e5c]" box="0 0 13 14">
                <path d="M12 1H1.200L6.500 7l-5.300 6H12" strokeWidth="1.300" strokeLinejoin="miter" />
              </Icon>
              <span className="ml-2">{f}</span>
            </label>
          </li>
        ))}
      </ul>
    </aside>
  );
}

export default function App() {
  return (
    <div className="flex min-h-screen bg-white font-['Open_Sans','Noto_Sans',sans-serif]">
      <Sidebar />
      <div className="flex min-w-0 flex-1 flex-col shadow-[0_0_8px_rgba(0,0,0,0.3)]">
        <TopBar />
        <div className="flex flex-1">
          <Canvas />
          <FiltersPane />
          <VisualizationsPane />
          <DataPane />
        </div>
      </div>
    </div>
  );
}
